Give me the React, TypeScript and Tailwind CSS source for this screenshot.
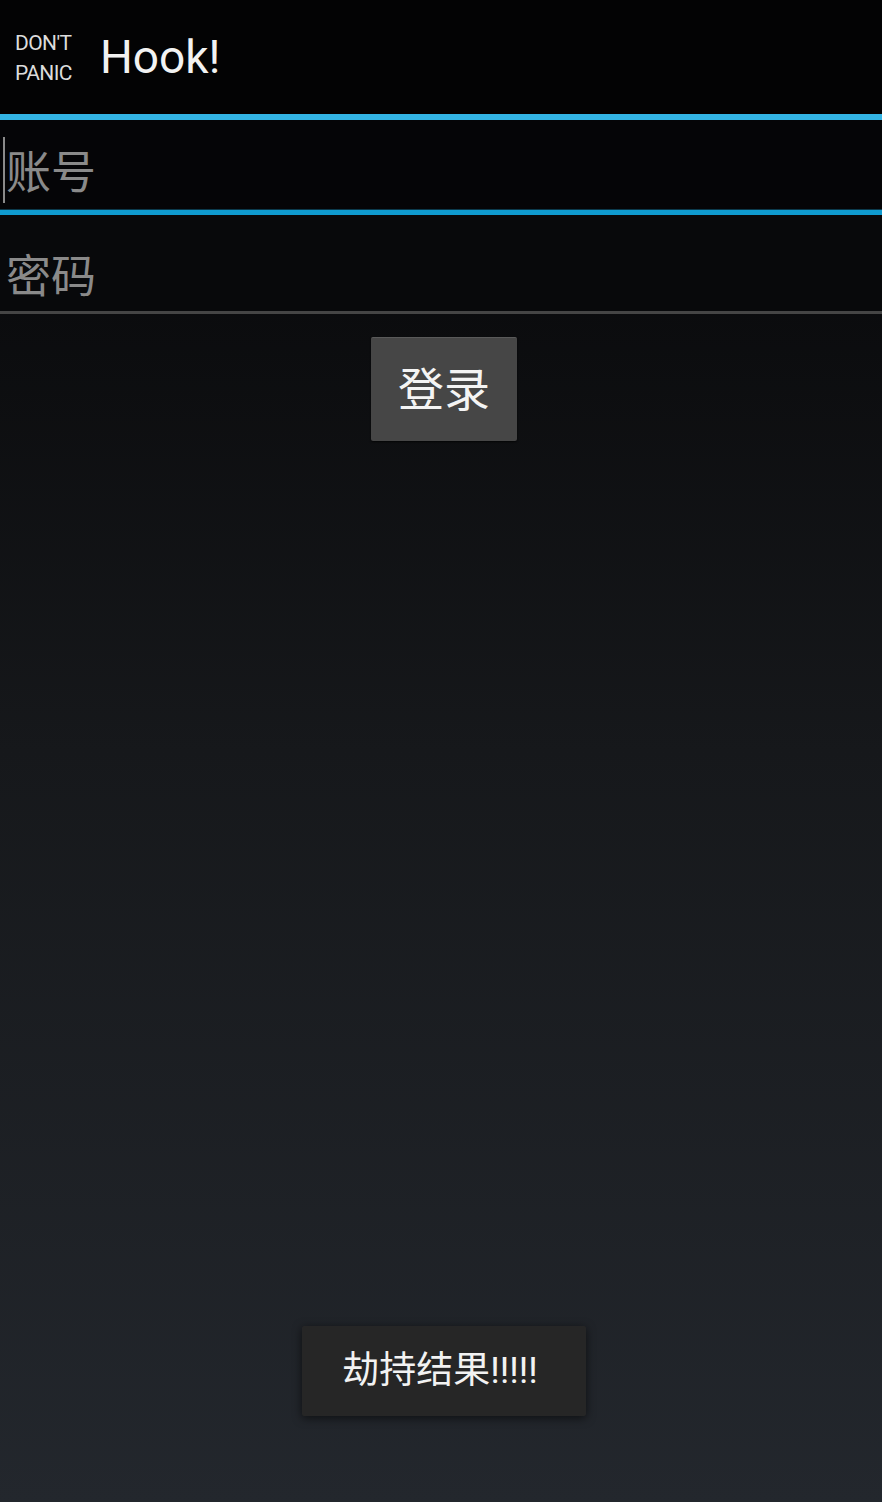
export default function App() {
  return (
    <div
      className="w-[882px] h-[1502px] flex flex-col bg-gradient-to-b from-[#050506] via-[#16181b] to-[#23272d] text-white overflow-hidden"
      style={{ fontFamily: '"Roboto", "Noto Sans CJK SC", sans-serif' }}
    >
      {/* action bar */}
      <header className="h-[114px] bg-[#030304] flex items-center">
        <div className="ml-[15px] flex flex-col text-[21px] leading-[30px] text-[#dcdcdc] tracking-[-0.6px] pt-[2px]">
          <span>DON'T</span>
          <span>PANIC</span>
        </div>
        <div className="ml-[28px] text-[46px] leading-none text-[#f2f2f2] pb-[1px]">Hook!</div>
      </header>
      <div className="h-[6px] bg-[#33b5e5]" />

      {/* account */}
      <div className="h-[89px] bg-[#050507] flex items-center relative">
        <div className="absolute left-[3px] top-[17px] w-[2px] h-[66px] bg-[#8a8a8a]" />
        <span className="ml-[6px] mt-[18px] text-[45px] leading-none text-[#8a8a8a]">账号</span>
      </div>
      <div className="h-[1px] bg-[#0b3a4c]" />
      <div className="h-[5px] bg-[#0f9bd0]" />

      {/* password */}
      <div className="h-[96px] bg-[#08090b] flex items-center">
        <span className="ml-[6px] mt-[28px] text-[45px] leading-none text-[#8a8a8a]">密码</span>
      </div>
      <div className="h-[3px] bg-[#454545]" />

      <div className="flex justify-center mt-[23px] pl-[6px]">
        <button className="w-[146px] h-[104px] bg-[#464646] border-t border-[#5a5a5a] rounded-[2px] shadow-[0_1px_2px_rgba(0,0,0,0.7)] text-[46px] text-[#f4f4f4] leading-none">
          登录
        </button>
      </div>

      <div className="flex-1" />

      <div className="flex justify-center mb-[86px] pl-[6px]">
        <div className="w-[284px] h-[90px] bg-[#262626] rounded-[2px] shadow-[0_2px_10px_rgba(0,0,0,0.6)] flex items-center justify-center pr-[8px] text-[37px] text-[#f2f2f2]">
          劫持结果!!!!!
        </div>
      </div>
    </div>
  );
}
